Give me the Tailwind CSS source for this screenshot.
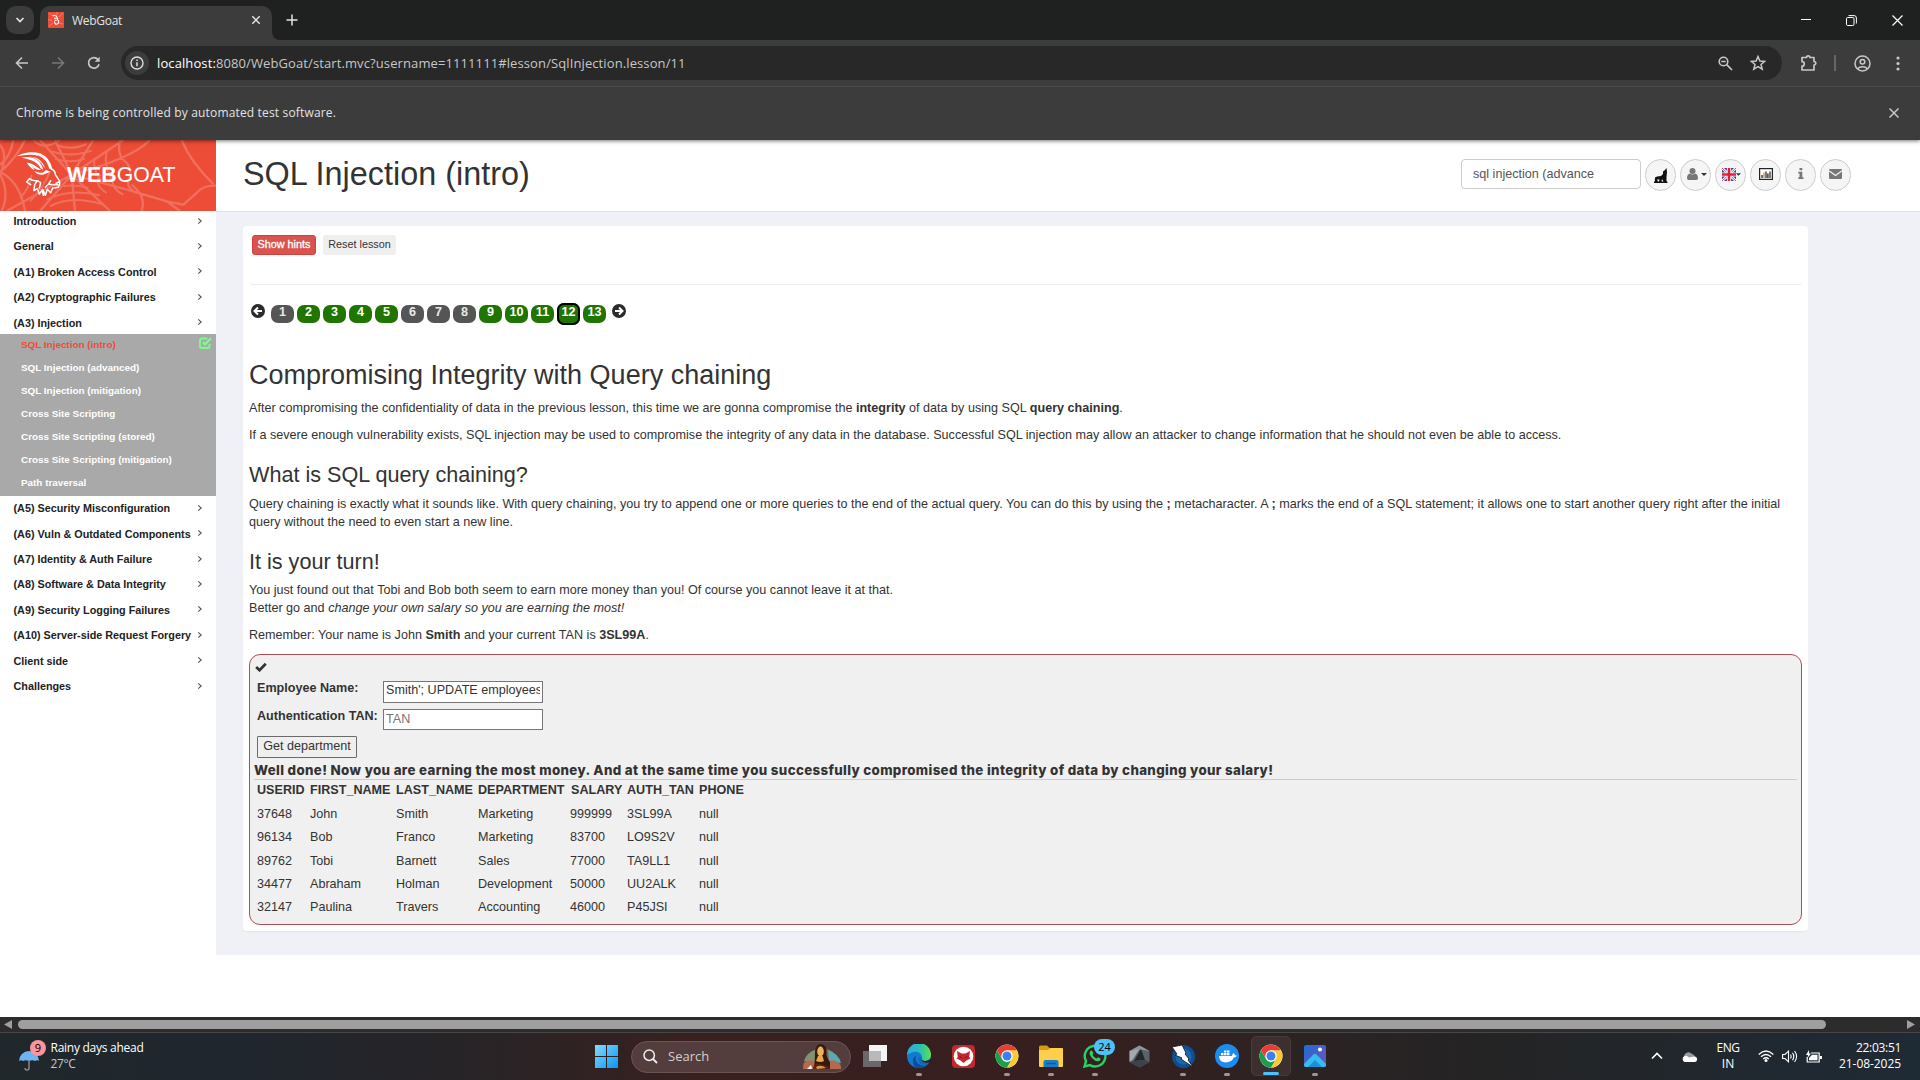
<!DOCTYPE html>
<html lang="en">
<head>
<meta charset="utf-8">
<title>WebGoat</title>
<script src="https://cdn.jsdelivr.net/npm/@tailwindcss/browser@4"></script>
</head>
<body class="w-[1920px] h-[1080px] overflow-hidden flex flex-col bg-white font-['Liberation_Sans',Arial,sans-serif] text-[12.6px] leading-[18px] text-[#333]">

<svg class="hidden">
  <symbol id="chev" viewBox="0 0 6 8"><path d="M1.300 1.300 4.200 4 1.300 6.700" fill="none" stroke="#555" stroke-width="1.100"/></symbol>
  <symbol id="chrome" viewBox="0 0 48 48">
    <circle cx="24" cy="24" r="23" fill="#fff"/>
    <path d="M24 12.5H43.9A23 23 0 0 1 24 47L34 29.7Z" fill="#fcc934"/>
    <path d="M4.1 12.5A23 23 0 0 0 24 47L34 29.7A11.5 11.5 0 0 1 14 29.7Z" fill="#1e9e4a"/>
    <path d="M24 12.5H43.9A23 23 0 0 0 4.1 12.5L14 29.7Z" fill="#ea3d2f"/>
    <circle cx="24" cy="24" r="11.5" fill="#fff"/><circle cx="24" cy="24" r="9" fill="#3d7ff2"/>
  </symbol>
</svg>

<!-- Browser chrome -->
<header class="h-[140px] shrink-0 flex flex-col bg-[#3c3c3c] font-['Open_Sans','Noto_Sans',sans-serif] text-[#e3e3e3] relative z-10 shadow-[0_1px_4px_rgba(0,0,0,.55)]">
  <div class="h-10 bg-[#1f2120] flex items-start relative">
    <div class="ml-[6px] mt-[6px] w-7 h-7 rounded-[10px] bg-[#3c3c3c] flex items-center justify-center">
      <svg class="w-[10px] h-[8px]" viewBox="0 0 10 8"><path d="M1.5 2 5 5.5 8.5 2" fill="none" stroke="#e3e3e3" stroke-width="1.7"/></svg>
    </div>
    <div class="ml-[6px] mt-[6px] w-[232px] h-[34px] rounded-t-[10px] bg-[#3c3c3c] flex items-center relative">
      <svg class="absolute -left-2 bottom-0 w-2 h-2" viewBox="0 0 8 8"><path d="M8 0V8H0A8 8 0 0 0 8 0Z" fill="#3c3c3c"/></svg>
      <svg class="absolute -right-2 bottom-0 w-2 h-2" viewBox="0 0 8 8"><path d="M0 0V8H8A8 8 0 0 1 0 0Z" fill="#3c3c3c"/></svg>
      <svg class="ml-2 -mt-[6px] w-4 h-4" viewBox="0 0 16 16"><path d="M0 0h16v16H0z" fill="#ed4c36"/><path d="M1 1 6 5M15 1l-4 4M1 14l4-3M15 12l-4-1M0 8h4M9 0v3" stroke="#f4897b" stroke-width=".8"/><path d="M4.5 3.5c3-1 5 1 5 4 1.500 1 1.500 2 1 3.500-1 .5-1.500 2-3 1-.5-1-1-1-1-2.500M6 6l2.500.5M6.500 8l2 .5" fill="none" stroke="#fff" stroke-width="1.100"/></svg>
      <span class="ml-2 -mt-[5px] text-[12px] tracking-[-0.29px]">WebGoat</span>
      <svg class="ml-auto mr-[11px] -mt-[6px] w-[10px] h-[10px]" viewBox="0 0 10 10"><path d="M1.300 1.300 8.700 8.700M8.700 1.300 1.300 8.700" stroke="#e3e3e3" stroke-width="1.500"/></svg>
    </div>
    <svg class="ml-[14px] mt-[14px] w-[12px] h-[12px]" viewBox="0 0 12 12"><path d="M6 .5V11.500M.5 6H11.500" stroke="#e3e3e3" stroke-width="1.500"/></svg>
    <div class="ml-auto flex items-center h-10 gap-[35px] pr-[17.500px]">
      <svg class="w-[10px] h-[10px]" viewBox="0 0 10 10"><path d="M0 4.500H10" stroke="#fff"/></svg>
      <svg class="w-[11px] h-[11px]" viewBox="0 0 11 11"><rect x=".5" y="2.500" width="7.500" height="8" rx="1.200" fill="none" stroke="#fff"/><path d="M2.500.6H8A2.400 2.400 0 0 1 10.400 3V8.500" fill="none" stroke="#fff"/></svg>
      <svg class="w-[11px] h-[11px]" viewBox="0 0 11 11"><path d="M.5.5 10.500 10.500M10.500.5.5 10.500" stroke="#fff" stroke-width="1.200"/></svg>
    </div>
  </div>
  <div class="h-[46px] flex items-center">
    <svg class="ml-[15px] w-[14px] h-[14px]" viewBox="0 0 14 14"><path d="M13 7H2M7 1.500 1.500 7 7 12.500" fill="none" stroke="#c7c7c7" stroke-width="1.600"/></svg>
    <svg class="ml-[22px] w-[14px] h-[14px]" viewBox="0 0 14 14"><path d="M1 7H12M7 1.500 12.500 7 7 12.500" fill="none" stroke="#777" stroke-width="1.600"/></svg>
    <svg class="ml-[22px] w-[14px] h-[14px]" viewBox="0 0 14 14"><path d="M12 8.200A5.300 5.300 0 1 1 10.900 3.400" fill="none" stroke="#c7c7c7" stroke-width="1.700"/><path d="M12.700.8V5.800H7.700Z" fill="#c7c7c7"/></svg>
    <div class="ml-5 w-[1661px] h-[34px] rounded-full bg-[#282828] flex items-center">
      <div class="ml-1 w-6 h-6 rounded-full bg-[#3c3c3c] flex items-center justify-center">
        <svg class="w-[14px] h-[14px]" viewBox="0 0 14 14"><circle cx="7" cy="7" r="6" fill="none" stroke="#dcdcdc" stroke-width="1.400"/><path d="M7 6.200V10.300M7 3.600V5" stroke="#dcdcdc" stroke-width="1.500"/></svg>
      </div>
      <div class="ml-2 text-[13px] tracking-[0.105px] text-[#c7c7c7]"><span class="text-white">localhost:</span>8080/WebGoat/start.mvc?username=1111111#lesson/SqlInjection.lesson/11</div>
      <svg class="ml-auto w-[15px] h-[15px]" viewBox="0 0 15 15"><circle cx="5.500" cy="5.500" r="4.300" fill="none" stroke="#c7c7c7" stroke-width="1.600"/><path d="M3.300 5.500H7.700M8.700 8.700 14 14" stroke="#c7c7c7" stroke-width="1.700"/></svg>
      <svg class="ml-[17px] mr-[16px] w-4 h-4" viewBox="0 0 16 16"><path d="M8 1.500 9.900 6 14.700 6.400 11 9.500 12.200 14.200 8 11.700 3.800 14.200 5 9.500 1.300 6.400 6.100 6Z" fill="none" stroke="#c7c7c7" stroke-width="1.500"/></svg>
    </div>
    <svg class="ml-[18px] w-[18px] h-[18px]" viewBox="0 0 18 18"><path d="M2 3.500H6.500A1.700 1.700 0 0 1 9.900 3.500H14V7.500A1.700 1.700 0 0 1 14 11V16H2V12.200A2.200 2.200 0 0 0 2 7.700Z" fill="none" stroke="#c7c7c7" stroke-width="1.700" stroke-linejoin="round"/></svg>
    <div class="ml-4 w-[2px] h-4 bg-[#666]"></div>
    <svg class="ml-[18px] w-[17px] h-[17px]" viewBox="0 0 17 17"><circle cx="8.500" cy="8.500" r="7.500" fill="none" stroke="#c7c7c7" stroke-width="1.500"/><circle cx="8.500" cy="6.700" r="2.300" fill="none" stroke="#c7c7c7" stroke-width="1.500"/><path d="M3.500 13.700C6 11 11 11 13.500 13.700" fill="none" stroke="#c7c7c7" stroke-width="1.500"/></svg>
    <svg class="ml-[25px] w-[4px] h-[15px]" viewBox="0 0 4 15"><circle cx="2" cy="2" r="1.600" fill="#c7c7c7"/><circle cx="2" cy="7.500" r="1.600" fill="#c7c7c7"/><circle cx="2" cy="13" r="1.600" fill="#c7c7c7"/></svg>
  </div>
  <div class="h-[54px] border-t border-[#4c4c4c] flex items-center justify-between pl-4 pr-[21px]">
    <span class="text-[12px] tracking-[0.16px] -mt-px">Chrome is being controlled by automated test software.</span>
    <svg class="w-[10px] h-[10px] -mt-px" viewBox="0 0 10 10"><path d="M.5.5 9.500 9.500M9.500.5.5 9.500" stroke="#c7c7c7" stroke-width="1.500"/></svg>
  </div>
</header>

<!-- Page -->
<div class="h-[877px] shrink-0 flex">
  <aside class="w-[216px] shrink-0 flex flex-col">
    <div class="h-[71px] shrink-0 bg-[#ed4c36] relative overflow-hidden">
      <svg class="absolute inset-0 w-[216px] h-[71px]" viewBox="0 6 648 213">
        <g fill="none" stroke="#f0705f" stroke-width="7">
          <path d="M0 20Q25 50 0 110M40 6Q30 60 0 80M75 6Q50 60 0 102Q60 130 75 219M120 6 215 110 20 219M165 6 215 110M215 110 280 6M215 110 370 6M215 110 120 219M215 110 225 219M215 110 330 219M215 110 400 160 500 190 540 219M0 108Q30 165 5 219M215 110Q400 60 450 6M360 6Q350 50 375 70T385 130Q380 150 410 165M545 6Q570 70 640 138M648 143Q610 140 590 165L550 200 500 190M395 140Q440 175 425 219"/>
          <path stroke-width="6" d="M168 20Q210 40 260 18M155 40Q210 60 275 38M165 62Q212 78 255 62M285 60Q275 90 305 130M320 40Q310 90 340 130M140 185Q210 150 300 172M150 205Q215 170 310 200M165 150Q215 135 265 150M300 110Q280 140 320 165M340 95Q325 150 370 170M100 6Q130 40 180 6M90 190Q130 150 150 100M60 180Q90 150 95 110"/>
        </g>
        <g fill="#fff">
          <path d="M50 55Q84 36 120 46Q150 58 157 94L148 92Q140 62 116 53Q88 46 50 55Z"/>
          <path d="M64 59Q98 52 118 72Q128 84 130 96L121 90Q114 68 64 59Z"/>
          <path d="M94 56Q124 58 136 92L128 82Q118 64 94 56Z"/>
          <path d="M80 74Q96 74 112 88L124 96 112 95Q100 92 94 82L104 96Q92 92 80 74Z"/>
          <path d="M102 98Q114 106 128 104L138 96 152 101 142 105 128 110Q112 112 102 98Z"/>
        </g>
        <g fill="none" stroke="#fff" stroke-width="4.500" stroke-linecap="round" stroke-linejoin="round">
          <path d="M154 93Q166 98 166 110L178 128Q182 140 174 148L162 150M178 132 168 136M160 140 174 140"/>
          <path d="M88 122 80 132 92 140M88 122Q98 130 112 128L104 140 102 158 112 152 118 168 128 154 136 172 142 154 152 164 158 150M112 128 122 134 118 150M130 172 126 156M146 138 136 148M152 128 146 138 156 140"/>
        </g>
      </svg>
      <div class="absolute left-[67px] top-[23px] text-[21.3px] leading-6 text-white whitespace-nowrap"><b>WEB</b>GOAT</div>
    </div>
    <nav class="-mt-[2.700px] relative font-bold text-[10.8px] text-[#222]" id="nav"></nav>
  </aside>

  <div class="w-[1704px] flex flex-col">
    <div class="h-[72px] shrink-0 bg-white border-b border-[#e2e2e8] flex items-start pl-[27px]">
      <h1 class="mt-[16px] text-[32.4px] leading-[36px]">SQL Injection (intro)</h1>
      <div class="ml-auto mt-[19px] mr-[69px] flex items-start gap-[4px]">
        <div class="w-[180px] h-[30px] border border-[#ccc] rounded-[4px] px-[11px] leading-[28px] text-[#555] bg-white">sql injection (advance</div>
        <div class="w-[31px] h-[32px] rounded-full border border-[#ccc] bg-[#f5f5f5] flex items-center justify-center"><svg class="w-[14px] h-[15px]" viewBox="0 0 14 15"><path d="M12.500 0 11 2 9 3.500 9 6 7 8 3 8.500 1 9.500.8 13.500H0V15H13.500V14L12.500 13V9L13 4Z" fill="#111"/><path d="M3 11.500 4 13.500H5L5.500 11.500ZM8 11 7.500 13.500H9.500Z" fill="#f5f5f5"/></svg></div>
        <div class="w-[31px] h-[32px] rounded-full border border-[#ccc] bg-[#f5f5f5] flex items-center justify-center gap-[3px] pl-[2px]"><svg class="w-[11px] h-[12px] -mt-[3px]" viewBox="0 0 11 12"><circle cx="5.500" cy="3" r="3" fill="#777"/><path d="M0 10.500Q0 6 3 5.500 5.500 7.500 8 5.500 11 6 11 10.500 10.500 12 9 12H2Q.5 12 0 10.500Z" fill="#777"/></svg><svg class="w-[6px] h-[3px] -mt-px" viewBox="0 0 6 3"><path d="M0 0H6L3 3Z" fill="#333"/></svg></div>
        <div class="w-[31px] h-[32px] rounded-full border border-[#ccc] bg-[#f5f5f5] flex items-center justify-center pl-[2px] pb-px"><svg class="w-[14px] h-[13px] shrink-0" viewBox="0 0 13 13" preserveAspectRatio="none"><path d="M0 0h13v13H0z" fill="#2b3f8c"/><path d="M0 0 13 13M13 0 0 13" stroke="#fff" stroke-width="2.600"/><path d="M0 0 13 13M13 0 0 13" stroke="#d8213b" stroke-width=".8"/><path d="M6.500 0V13M0 6.500H13" stroke="#fff" stroke-width="4"/><path d="M6.500 0V13M0 6.500H13" stroke="#d8213b" stroke-width="2.400"/></svg><svg class="w-[5px] h-[3px]" viewBox="0 0 6 3"><path d="M0 0H6L3 3Z" fill="#333"/></svg></div>
        <div class="w-[31px] h-[32px] rounded-full border border-[#ccc] bg-[#f5f5f5] flex items-center justify-center"><svg class="w-[14px] h-[12px] -mt-[3px]" viewBox="0 0 14 12"><rect x=".6" y=".6" width="12.800" height="10.800" fill="#fff" stroke="#222" stroke-width="1.200"/><path d="M3 10V7M8.900 10V5.500" stroke="#223" stroke-width="1.300"/><path d="M5 10V4.500" stroke="#d48a28" stroke-width="1.300"/><path d="M7 10V3.500M11 10V3.500" stroke="#333" stroke-width="1.300"/></svg></div>
        <div class="w-[31px] h-[32px] rounded-full border border-[#ccc] bg-[#f5f5f5] flex items-center justify-center"><svg class="w-[6px] h-[11px] -mt-[3px]" viewBox="0 0 6 11"><path d="M1.500 0H4.300V2.300H1.500ZM.3 3.800H4.300V9.200H5.500V11H.3V9.200H1.500V5.600H.3Z" fill="#777"/></svg></div>
        <div class="w-[31px] h-[32px] rounded-full border border-[#ccc] bg-[#f5f5f5] flex items-center justify-center"><svg class="w-[13px] h-[10px] -mt-[2px]" viewBox="0 0 13 10"><rect width="13" height="10" rx="1" fill="#777"/><path d="M0 1.800 6.500 6.500 13 1.800" fill="none" stroke="#f5f5f5" stroke-width="1.200"/></svg></div>
      </div>
    </div>

    <main class="h-[743px] shrink-0 bg-[#f0f1f7] pt-[14px] pl-[27px]">
      <section class="w-[1565px] h-[705px] rounded-[4px] bg-white shadow-[0_1px_1px_rgba(0,0,0,.05)] pl-[6px] pr-[6px]">
        <div class="h-[59px] border-b border-[#eee] rounded-[4px] pt-[9px] pl-[3px] flex items-start gap-[7px] text-[10.8px] leading-[16px]">
          <div class="w-16 h-5 rounded-[3px] bg-[#d9534f] border border-[#d43f3a] text-white text-center leading-[17px] [-webkit-text-stroke:0.3px_white]">Show hints</div>
          <div class="w-[73px] h-5 rounded-[3px] bg-[#efefef] text-center leading-[19px]">Reset lesson</div>
        </div>
        <div class="mt-[17px] h-[24px] pl-[2px] flex items-start" id="pages"></div>

        <article class="mt-[35px]">
          <h2 class="text-[27px] leading-[29.700px]">Compromising Integrity with Query chaining</h2>
          <p class="mt-[8px]">After compromising the confidentiality of data in the previous lesson, this time we are gonna compromise the <b>integrity</b> of data by using SQL <b>query chaining</b>.</p>
          <p class="mt-[9px]">If a severe enough vulnerability exists, SQL injection may be used to compromise the integrity of any data in the database. Successful SQL injection may allow an attacker to change information that he should not even be able to access.</p>
          <h3 class="mt-[19px] text-[21.6px] leading-[23.760px]">What is SQL query chaining?</h3>
          <p class="mt-[8.600px]">Query chaining is exactly what it sounds like. With query chaining, you try to append one or more queries to the end of the actual query. You can do this by using the <b>;</b> metacharacter. A <b>;</b> marks the end of a SQL statement; it allows one to start another query right after the initial<br>query without the need to even start a new line.</p>
          <h3 class="mt-[18.600px] text-[21.6px] leading-[23.760px]">It is your turn!</h3>
          <p class="mt-[8px]">You just found out that Tobi and Bob both seem to earn more money than you! Of course you cannot leave it at that.<br>Better go and <em>change your own salary so you are earning the most!</em></p>
          <p class="mt-[9px]">Remember: Your name is John <b>Smith</b> and your current TAN is <b>3SL99A</b>.</p>
        </article>

        <div class="mt-[10px] w-[1553px] h-[271px] rounded-[11px] border border-[#a94f55] bg-[#f0f0f0] px-[4px] pt-[7px] flex flex-col">
          <svg class="ml-[1px] w-[12px] h-[10px] shrink-0" viewBox="0 0 12 10"><path d="M1.200 5 4.500 8.200 10.800 1.800" fill="none" stroke="#333" stroke-width="2.700"/></svg>
          <div class="mt-[9px] h-[28px] flex items-start pl-[3px]"><b class="w-[126px] -mt-[2px]">Employee Name:</b><div class="w-[160px] h-[22px] border border-[#767676] bg-white px-[2px] leading-[17px]"><div class="overflow-hidden whitespace-nowrap h-full">Smith'; UPDATE employees</div></div></div>
          <div class="h-[27px] flex items-start pl-[3px]"><b class="w-[126px] -mt-[2px]">Authentication TAN:</b><div class="w-[160px] h-[21px] border border-[#767676] bg-white px-[2px] leading-[18px] text-[#757575]">TAN</div></div>
          <div class="ml-[3px] w-[100px] h-[22px] shrink-0 border border-[#6b6b6b] rounded-[1px] bg-[#efefef] text-center leading-[18px]">Get department</div>
          <div class="mt-[3px] h-[19px] shrink-0 font-['Inter',sans-serif] font-extrabold text-[13.300px] tracking-[0.355px] leading-[18px] whitespace-nowrap border-b border-[#ccc]">Well done! Now you are earning the most money. And at the same time you successfully compromised the integrity of data by changing your salary!</div>
          <table class="w-[500px] table-fixed text-left ml-[3px]">
            <colgroup><col class="w-[53px]"><col class="w-[86px]"><col class="w-[82px]"><col class="w-[92px]"><col class="w-[57px]"><col class="w-[72px]"><col></colgroup>
            <tbody id="rows"></tbody>
          </table>
        </div>
      </section>
    </main>
  </div>
</div>

<!-- Horizontal scrollbar -->
<div class="h-[15px] shrink-0 bg-[#2c2c2c] flex items-center pl-[4px] pr-[5px]">
  <svg class="w-[8px] h-[9px]" viewBox="0 0 8 9"><path d="M8 0V9L0 4.500Z" fill="#9f9f9f"/></svg>
  <div class="ml-[6px] w-[1808px] h-[9px] rounded-full bg-[#9f9f9f]"></div>
  <svg class="ml-auto w-[8px] h-[9px]" viewBox="0 0 8 9"><path d="M0 0V9L8 4.500Z" fill="#9f9f9f"/></svg>
</div>

<!-- Taskbar -->
<footer class="h-[48px] shrink-0 border-t border-[#484646] bg-[linear-gradient(90deg,#20282b_0%,#1f262e_12%,#272427_24%,#38201f_36%,#371f1f_56%,#2d2222_66%,#242425_78%,#202830_92%,#1e2a34_100%)] flex items-center font-['Open_Sans','Noto_Sans',sans-serif] text-[12px] leading-4 text-white">
  <div class="w-[595px] flex items-center pl-[19px]">
    <div class="relative w-[26px] h-[30px]">
      <svg class="absolute left-0 top-[9px] w-5 h-5" viewBox="0 0 20 20"><path d="M0 10A10 10 0 0 1 20 10Q18 8.500 16 10 13.500 8.500 10 10 6.500 8.500 4 10 2 8.500 0 10Z" fill="#6db5f2"/><path d="M10 9V17A2 2 0 0 1 6 17" fill="none" stroke="#888" stroke-width="1.500"/></svg>
      <span class="absolute left-[11px] -top-[2px] w-4 h-4 rounded-full bg-[#fd939c] text-black text-[11px] leading-4 text-center">9</span>
    </div>
    <div class="ml-[5.500px] -mt-px"><div class="tracking-[-0.265px]">Rainy days ahead</div><div class="text-[#c8c8c8] tracking-[-0.350px]">27°C</div></div>
  </div>
  <svg class="w-[23px] h-[23px]" viewBox="0 0 23 23"><defs><linearGradient id="w" x2="1" y2="1"><stop stop-color="#7fdcff"/><stop offset="1" stop-color="#0a95f5"/></linearGradient></defs><path d="M0 0H11V11H0ZM12 0H23V11H12ZM0 12H11V23H0ZM12 12H23V23H12Z" fill="url(#w)"/></svg>
  <div class="ml-[13px] w-[220px] h-8 rounded-full bg-[#533d3d] border border-[#6a5555] flex items-center pl-[11px] pr-2">
    <svg class="w-[15px] h-[15px]" viewBox="0 0 15 15"><circle cx="6.200" cy="6.200" r="5.200" fill="none" stroke="#eee" stroke-width="1.500"/><path d="M10 10 14 14" stroke="#eee" stroke-width="1.800"/></svg>
    <span class="ml-[10px] -mt-[2px] text-[13px] text-[#d6cece]">Search</span>
    <svg class="ml-auto w-[40px] h-[26px]" viewBox="0 0 40 26"><path d="M1 25Q1 8 20 3 39 8 39 25Z" fill="#8f5a40"/><path d="M2 17Q4 9 13 6V17Z" fill="#7d9473"/><path d="M26 6Q37 10 39 19L27 17Z" fill="#5aa8b4"/><path d="M2 19Q8 14 14 18V25H1ZM27 17Q34 14 39 23V25H27Z" fill="#b5694f"/><path d="M12 25Q13 17 13 8 14 0 19 0 25 1 24.500 8 24 13 28 18V25Z" fill="#35180e"/><ellipse cx="18.500" cy="7.500" rx="3.300" ry="5" fill="#e9b25c"/><path d="M16 12 14 17Q19 19 22 17L20.500 12Z" fill="#e8a650"/><path d="M11 25Q12 18 18 20L26 22 28 25Z" fill="#55230f"/><path d="M14 23Q19 20 24 24L15 25Z" fill="#dc9449"/><path d="M5 25 9 21 10 25Z" fill="#fff"/></svg>
  </div>
  <div class="ml-[2px] flex h-full">
    <div class="w-11 flex flex-col items-center pt-[12px]"><svg class="w-6 h-[22px]" viewBox="0 0 24 22"><rect x="6" width="18" height="16" fill="#f5f5f5"/><rect y="6" width="18" height="16" fill="#707070" opacity=".9"/><path d="M6 6H18V16H6Z" fill="#b9b9b9"/></svg></div>
    <div class="w-11 flex flex-col items-center pt-[11px]"><svg class="w-6 h-6" viewBox="0 0 24 24"><defs><linearGradient id="e" x2="1"><stop stop-color="#2aa9e8"/><stop offset=".6" stop-color="#2cc4a8"/><stop offset="1" stop-color="#5fe04f"/></linearGradient></defs><circle cx="12" cy="12" r="12" fill="#1279ce"/><path d="M0 11A12 12 0 0 1 24 11C24 15 20 17 17 17 14 16.500 14.500 14.500 15 13.500 15 9 10 7 6 8 3 9 1 10 0 11Z" fill="url(#e)"/><path d="M9 12C7 17 12 23 19 21.500A12 12 0 0 1 8 23.300C5 19 5 13 9 12Z" fill="#0b4c9c"/><path d="M15 13.500C14.500 15 15 16.500 17.500 17 20 17.300 22.500 16 24 14.500L24 20 22 18.600C17 20 13 17 15 13.500Z" fill="#371f1f"/><path d="M12 13C10 17 13 21 19 21L22 18.500C17 20 13 17 15 13.500Z" fill="#1568b8"/></svg><i class="mt-[5px] w-[6px] h-[3px] rounded-full bg-[#a19494]"></i></div>
    <div class="w-11 flex flex-col items-center pt-[12px]"><svg class="w-[23px] h-[23px]" viewBox="0 0 23 23"><rect width="23" height="23" rx="4" fill="#c3282d"/><circle cx="11.500" cy="11.500" r="9.800" fill="#fff"/><path d="M5 6 9.500 8.500H13.500L18 6 17.200 12 18.500 13.500 14.500 15.500 11.500 18 8.500 15.500 4.500 13.500 5.800 12Z" fill="#c3282d"/><path d="M7.500 11.500 10 13M15.500 11.500 13 13" stroke="#7a1216"/></svg></div>
    <div class="w-11 flex flex-col items-center pt-[11px]"><svg class="w-6 h-6"><use href="#chrome"/></svg><i class="mt-[5px] w-[6px] h-[3px] rounded-full bg-[#a19494]"></i></div>
    <div class="w-11 flex flex-col items-center pt-[11px]"><svg class="w-6 h-6" viewBox="0 0 24 24"><path d="M0 3Q0 1.500 1.500 1.500H8L10.500 4V9H0Z" fill="#d89a10"/><path d="M0 6H9L11 4H23Q24 4 24 5V22Q24 23 23 23H1Q0 23 0 22Z" fill="#fdcf4b"/><path d="M4.500 23V18Q4.500 16 6.500 16H17.500Q19.500 16 19.500 18V23Z" fill="#1a7cc9"/><path d="M7 19.500H17" stroke="#0d5999" stroke-width="1.500"/></svg><i class="mt-[5px] w-[6px] h-[3px] rounded-full bg-[#a19494]"></i></div>
    <div class="w-11 flex flex-col items-center pt-[11px] relative"><svg class="w-6 h-6" viewBox="0 0 24 24"><path d="M1.500 22.500 3 17A10.300 10.300 0 1 1 7 21.100Z" fill="none" stroke="#25d366" stroke-width="2.400"/><path d="M7 7.500Q8.500 5.500 9.500 7.500L10.500 9.500 9.500 11Q11 13.500 13.500 14.500L15 13.200 17.500 14.500Q18 16.500 15.500 17.300 12.500 17.800 9 14 5.500 10 7 7.500Z" fill="#25d366"/></svg><i class="mt-[5px] w-[6px] h-[3px] rounded-full bg-[#a19494]"></i><span class="absolute left-[21px] top-[6px] w-[21px] h-4 rounded-full bg-[#4cc2ff] text-black text-[11px] leading-4 text-center">24</span></div>
    <div class="w-11 flex flex-col items-center pt-[12px]"><svg class="w-[21px] h-[23px]" viewBox="0 0 21 23"><path d="M10.500.5 20.500 6V17L10.500 22.500.5 17V6Z" fill="#5a6168"/><path d="M10.500.5 20.500 6 10.500 4.500.5 6Z" fill="#8d959c"/><path d="M.5 6 10.500 4 3.500 15 .5 17Z" fill="#a3a9ae"/><path d="M12 4 5 16 16 15Z" fill="#22272b"/><path d="M.5 17 5 16 16 15 20.500 17 10.500 22.500Z" fill="#3c434a"/></svg></div>
    <div class="w-11 flex flex-col items-center pt-[11px]"><svg class="w-6 h-6" viewBox="0 0 24 24"><circle cx="12.500" cy="12.500" r="11.500" fill="#0e4f94"/><circle cx="12.500" cy="12.500" r="8" fill="#1d66b0"/><path d="M1 3 11 1 15 9 14 10 18 15 17 16 22 23 10 15 11 14 4 11 6 10Z" fill="#fff" stroke="#111" stroke-width=".8"/></svg><i class="mt-[5px] w-[6px] h-[3px] rounded-full bg-[#a19494]"></i></div>
    <div class="w-11 flex flex-col items-center pt-[11px]"><svg class="w-6 h-6" viewBox="0 0 24 24"><circle cx="12" cy="12" r="12" fill="#1d8cf0"/><path d="M4 12H17Q17.500 9.500 18.500 9 20 10 19.700 11.300 21 11 21.800 11.700 21 13.500 18.800 13.500 17 18 10.500 18.500 4.500 18.500 4 12ZM6 9H8.500V11.300H6ZM9 9H11.500V11.300H9ZM12 9H14.500V11.300H12ZM9 6.500H11.500V8.600H9ZM12 6.500H14.500V8.600H12Z" fill="#fff"/></svg><i class="mt-[5px] w-[6px] h-[3px] rounded-full bg-[#a19494]"></i></div>
    <div class="w-11 flex flex-col items-center pt-[3px]"><div class="w-10 h-10 rounded-[5px] bg-[#3b2f2f] border border-[#473b3b] flex flex-col items-center pt-[7px]"><svg class="w-6 h-6 shrink-0"><use href="#chrome"/></svg><i class="mt-[4px] w-[16px] h-[3px] shrink-0 rounded-full bg-[#4cc2ff]"></i></div></div>
    <div class="w-11 flex flex-col items-center pt-[12px]"><svg class="w-[22px] h-[22px]" viewBox="0 0 22 22"><defs><linearGradient id="p" x2="1" y2="1"><stop stop-color="#1c6fd0"/><stop offset="1" stop-color="#7a4fb5"/></linearGradient></defs><rect width="22" height="22" rx="2" fill="url(#p)"/><path d="M0 19 9.500 9.500Q11 8 12.500 9.500L22 19V20Q22 22 20 22H2Q0 22 0 20Z" fill="#35bdf0"/><path d="M4 22 11 15 18 22Z" fill="#1c8fd8"/><circle cx="16" cy="4.500" r="2" fill="#fff"/></svg><i class="mt-[6px] w-[6px] h-[3px] rounded-full bg-[#a19494]"></i></div>
  </div>
  <div class="ml-auto flex items-center pr-[19px] -mt-px">
    <svg class="w-[12px] h-[8px]" viewBox="0 0 12 8"><path d="M1 6.500 6 1.500 11 6.500" fill="none" stroke="#fff" stroke-width="1.600"/></svg>
    <svg class="ml-[18px] w-[17px] h-[11px]" viewBox="0 0 17 11"><path d="M3 5A4.500 4.500 0 0 1 11 3 4 4 0 0 1 14 7L3 8Z" fill="#999"/><path d="M3.500 11A3.300 3.300 0 0 1 3.500 5Q6 4 8 6.500L13 5.500A2.800 2.800 0 0 1 14 11Z" fill="#fff"/></svg>
    <div class="ml-[18px] w-[24px] text-center"><div class="tracking-[-0.470px]">ENG</div><div>IN</div></div>
    <svg class="ml-[18px] w-[16px] h-[12px]" viewBox="0 0 16 12"><g fill="none" stroke="#fff" stroke-width="1.300"><path d="M.7 4.500Q8-2.500 15.300 4.500M3 6.800Q8 2.200 13 6.800M5.200 9Q8 6.500 10.800 9"/></g><circle cx="8" cy="10.500" r="1.500" fill="#fff"/></svg>
    <svg class="ml-[8px] w-[16px] h-[13px]" viewBox="0 0 16 13"><g fill="none" stroke="#fff" stroke-width="1.100"><path d="M.6 4.500H3L6.500 1.200V11.800L3 8.500H.6ZM8.500 4.500Q9.800 6.500 8.500 8.500M10.500 2.800Q13 6.500 10.500 10.200M12.600 1Q16.500 6.500 12.600 12"/></g></svg>
    <svg class="ml-[8px] w-[16px] h-[13px]" viewBox="0 0 16 13"><path d="M5 3H13.200V12H1.200V7" fill="none" stroke="#fff" stroke-width="1.200"/><path d="M3 10.200V8L6 4.800H11.500V10.200ZM14 6H16V9H14ZM3 0 0 5H2L1.500 8 5 3.500H3.200Z" fill="#fff"/></svg>
    <div class="ml-[17px] w-[62px] text-right"><div class="tracking-[-0.310px]">22:03:51</div><div class="tracking-[-0.063px]">21-08-2025</div></div>
  </div>
</footer>

<script>
const item = t => `<div class="h-[25.4px] flex items-center justify-between pl-[13.5px] pr-[13px]"><span class="whitespace-nowrap">${t}</span><svg class="w-[6px] h-[8px] -mt-[1px] shrink-0"><use href="#chev"/></svg></div>`;
const sub = (t, i) => `<div class="h-[23.1px] flex items-center pl-[21px] pb-[1.500px] relative ${i ? 'text-white' : 'text-[#ed4c36]'}"><span>${t}</span>${i ? '' : '<svg class="absolute right-[4px] top-[3px] w-[13px] h-[12px]" viewBox="0 0 13 12"><path d="M10.500 7V9Q10.500 11 8.500 11H3Q1 11 1 9V3.500Q1 1.500 3 1.500H8.500" fill="none" stroke="#7dfb8d" stroke-width="1.900"/><path d="M3.800 5 6 7.300 12 1.200" fill="none" stroke="#7dfb8d" stroke-width="2.300"/></svg>'}</div>`;
document.getElementById('nav').innerHTML =
  ['Introduction', 'General', '(A1) Broken Access Control', '(A2) Cryptographic Failures', '(A3) Injection'].map(item).join('') +
  '<div class="-mt-[1.300px] bg-[#a9a9a9] text-[9.900px]">' +
  ['SQL Injection (intro)', 'SQL Injection (advanced)', 'SQL Injection (mitigation)', 'Cross Site Scripting', 'Cross Site Scripting (stored)', 'Cross Site Scripting (mitigation)', 'Path traversal'].map(sub).join('') + '</div>' +
  ['(A5) Security Misconfiguration', '(A6) Vuln &amp; Outdated Components', '(A7) Identity &amp; Auth Failure', '(A8) Software &amp; Data Integrity', '(A9) Security Logging Failures', '(A10) Server-side Request Forgery', 'Client side', 'Challenges'].map(item).join('');

const arrow = d => `<svg class="w-[14px] h-[14px] mt-[2px]" viewBox="0 0 14 14"><circle cx="7" cy="7" r="7" fill="#2b2b2b"/><path d="${d}" fill="none" stroke="#fff" stroke-width="2"/></svg>`;
let pages = arrow('M11 7H4M7 3.500 3.500 7 7 10.500') + '<div class="flex gap-[3px] ml-[6px] mr-[6px] mt-[3px]">';
for (let n = 1; n <= 13; n++) {
  const c = [1, 6, 7, 8].includes(n) ? 'bg-[#555] text-[#e8e8e8]' : 'bg-[#207500] text-white';
  pages += `<div class="w-[23px] h-[18px] rounded-[7px] text-center font-bold text-[12.6px] leading-[15px] ${c} ${n === 12 ? 'ring-2 ring-black ring-inset h-[22px] -mt-[2px] pt-[2px]' : ''}">${n}</div>`;
}
document.getElementById('pages').innerHTML = pages + '</div>' + arrow('M3 7H10M7 3.500 10.500 7 7 10.500');

const data = ['37648 John Smith Marketing 999999 3SL99A null', '96134 Bob Franco Marketing 83700 LO9S2V null', '89762 Tobi Barnett Sales 77000 TA9LL1 null', '34477 Abraham Holman Development 50000 UU2ALK null', '32147 Paulina Travers Accounting 46000 P45JSI null'];
document.getElementById('rows').innerHTML =
  '<tr class="h-[22px] align-top">' + 'USERID FIRST_NAME LAST_NAME DEPARTMENT SALARY AUTH_TAN PHONE'.split(' ').map(h => `<th class="p-0 pt-px ${h === 'SALARY' ? 'pl-px' : ''}">${h}</th>`).join('') + '</tr>' +
  data.map(r => '<tr class="h-[23.3px]">' + r.split(' ').map(v => `<td class="p-0">${v}</td>`).join('') + '</tr>').join('');
</script>
</body>
</html>
